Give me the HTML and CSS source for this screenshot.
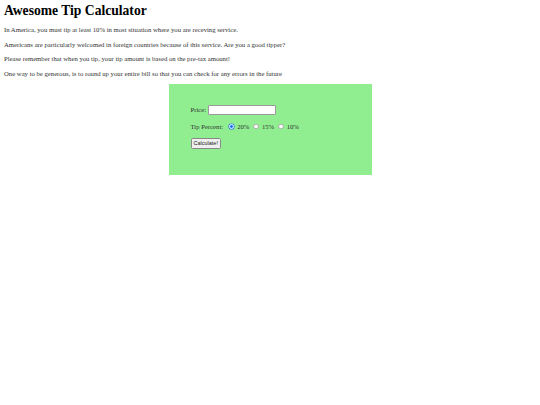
FILE: index.html
```html
<!DOCTYPE html>
<html>
<head>
<meta charset="utf-8">
<title>Awesome Tip Calculator</title>
<link rel="stylesheet" href="styles.css">
</head>
<body>
<h1 class="title">Awesome Tip Calculator</h1>
<p class="info">In America, you must tip at least 10% in most situation where you are receving service.</p>
<p class="info">Americans are particularly welcomed in foreign countries because of this service. Are you a good tipper?</p>
<p class="info">Please remember that when you tip, your tip amount is based on the pre-tax amount!</p>
<p class="info">One way to be generous, is to round up your entire bill so that you can check for any errors in the future</p>
<div class="calc">
  <div class="row">
    <label class="lbl">Price:</label>
    <span class="field"></span>
  </div>
  <div class="row">
    <span class="lbl">Tip Percent:</span>
    <span class="radio on"></span><span class="opt">20%</span>
    <span class="radio"></span><span class="opt">15%</span>
    <span class="radio"></span><span class="opt">10%</span>
  </div>
  <div class="row">
    <span class="btn">Calculate!</span>
  </div>
</div>
</body>
</html>
```
FILE: styles.css
```css
html, body {
  margin: 0;
  padding: 0;
  background: #ffffff;
}
body {
  padding: 3px 4px;
  font-family: "Liberation Serif", "Times New Roman", serif;
  color: #000;
}
.title {
  font-size: 13.6px;
  font-weight: bold;
  line-height: 16px;
  margin: 0 0 7px 0;
  color: #000;
}
.info {
  font-size: 6.7px;
  line-height: 8px;
  margin: 0 0 6.5px 0;
  color: #333;
}
.calc {
  width: 159px;
  height: 51px;
  margin: 2px auto 0 auto;
  background: #90ee90;
  padding: 21px 22px 19px 22px;
  font-size: 6.7px;
  color: #333;
  display: flex;
  flex-direction: column;
  gap: 8px;
}
.row {
  display: flex;
  align-items: center;
  height: 9px;
}
.lbl {
  margin-right: 1.5px;
}
.field {
  width: 66px;
  height: 8px;
  background: #fff;
  border: 0.5px solid #999;
  border-radius: 1px;
}
.radio {
  width: 5.5px;
  height: 5.5px;
  border-radius: 50%;
  background: #fff;
  border: 0.6px solid #aaa;
  box-sizing: border-box;
  margin: 0 3px 0 4px;
}
.radio.on {
  background: #1a73e8;
  border: 1.3px solid #fff;
  box-shadow: 0 0 0 0.6px #1a73e8;
}
.btn {
  font-family: "Liberation Sans", Arial, sans-serif;
  font-size: 5.5px;
  padding: 1px 2px;
  background: #efefef;
  border: 0.5px solid #888;
  border-radius: 1.5px;
  line-height: 6.5px;
  color: #222;
}
```
